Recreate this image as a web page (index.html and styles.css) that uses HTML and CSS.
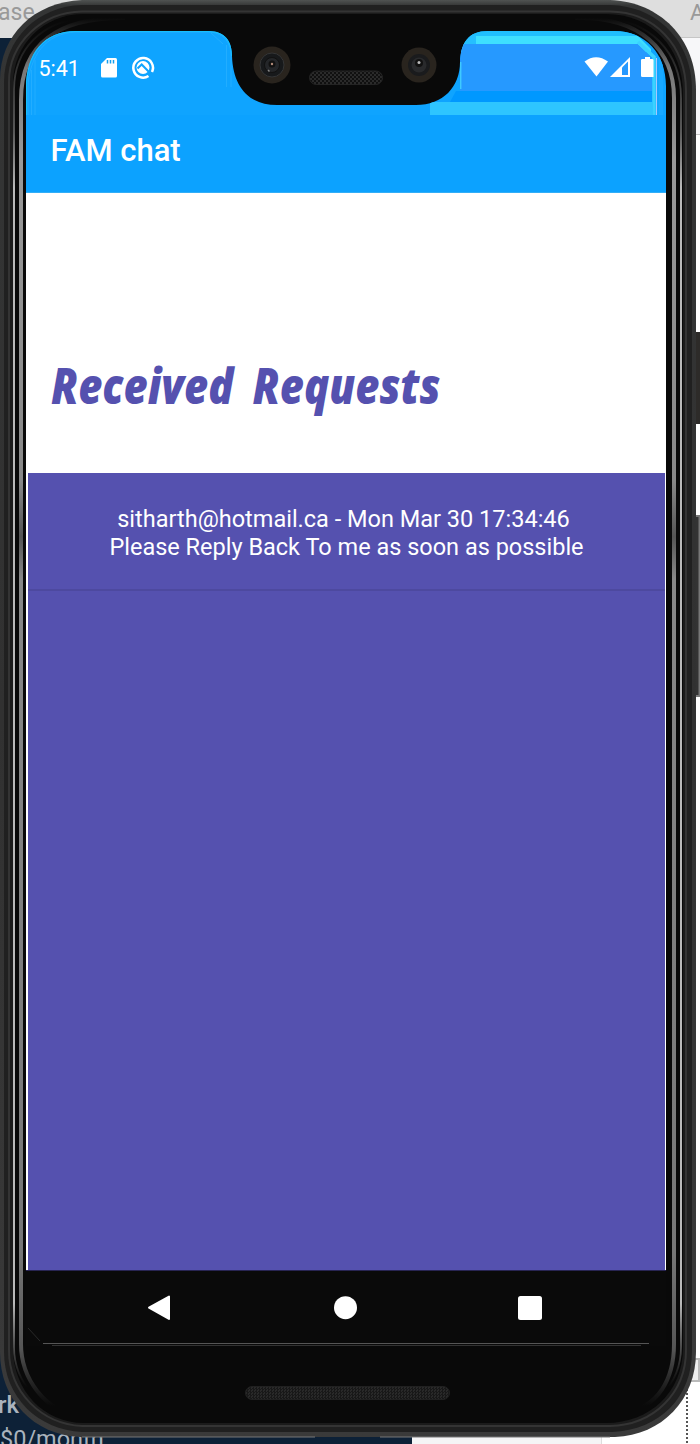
FILE: index.html
```html
<!DOCTYPE html>
<html lang="en">
<head>
<meta charset="utf-8">
<title>FAM chat</title>
<link rel="stylesheet" href="styles.css">
</head>
<body>
<main class="stage">
  <svg class="layer" viewBox="0 0 700 1444" aria-hidden="true">
    <defs>
      <linearGradient id="shell" x1="0" x2="0" y1="0" y2="1">
        <stop offset="0" stop-color="#505352"/><stop offset=".004" stop-color="#343535"/><stop offset=".5" stop-color="#313131"/><stop offset="1" stop-color="#3a3a3a"/>
      </linearGradient>
      <linearGradient id="shine" gradientUnits="userSpaceOnUse" x1="0" y1="18" x2="0" y2="1420">
        <stop offset="0" stop-color="#777" stop-opacity="0"/><stop offset=".035" stop-color="#777"/><stop offset=".1" stop-color="#999"/><stop offset=".33" stop-color="#888"/><stop offset=".37" stop-color="#555"/><stop offset=".4" stop-color="#888"/><stop offset=".88" stop-color="#777"/><stop offset=".95" stop-color="#555"/><stop offset=".99" stop-color="#444" stop-opacity="0"/>
      </linearGradient>
      <linearGradient id="rim" gradientUnits="userSpaceOnUse" x1="0" y1="20" x2="0" y2="1415">
        <stop offset="0" stop-color="#bbb" stop-opacity="0"/><stop offset=".08" stop-color="#bbb" stop-opacity=".5"/><stop offset=".12" stop-color="#ccc"/><stop offset=".92" stop-color="#ccc"/><stop offset=".98" stop-color="#777" stop-opacity="0"/>
      </linearGradient>
      <pattern id="mesh" width="4" height="4" patternUnits="userSpaceOnUse">
        <rect width="4" height="4" fill="#101010"/><path d="M0 1h2M2 3h2" stroke="#444"/>
      </pattern>
      <pattern id="meshLow" width="3" height="3" patternUnits="userSpaceOnUse">
        <rect width="3" height="3" fill="#181818"/><path d="M0 1h1M2 2h1" stroke="#393939"/>
      </pattern>
    </defs>
    <path d="M0 0H700V38H0Z" fill="#dedede"/>
    <path d="M0 38H60V1350H0ZM0 1350H412V1444H0Z" fill="#0d2137"/>
    <path d="M640 38H700V134H640Z" fill="#f7f7f9"/>
    <path d="M640 37.500H700M690 134.500H700" stroke="#c6c6c6"/>
    <path d="M412 1436H601V1444H412Z" fill="#f5f5f6"/>
    <path d="M601.500 1436V1444" stroke="#ddd"/>
    <rect x="688" y="1359" width="11" height="22" fill="#eee" stroke="#bbb" stroke-width="2"/>
    <path d="M687 1385V1444" stroke="#555" stroke-width="2" stroke-dasharray="2 2"/>
    <rect x="694" y="332" width="14" height="92" rx="2" fill="#2d2b29"/>
    <rect x="694" y="515" width="14" height="182" rx="2" fill="#777"/>
    <path d="M697 517V695" stroke="#333" stroke-width="3"/>
    <g font-family="Roboto, sans-serif">
      <text x="-2" y="20" font-size="23" fill="#999">ase</text>
      <text x="690" y="20" font-size="22" fill="#999">A</text>
      <text x="-2" y="1413" font-size="24" font-weight="500" fill="#aab3bd">rk</text>
      <text x="0" y="1447" font-size="23.500" fill="#aab3bd">$0/month</text>
    </g>
    <path d="M82 0H610C660 2 696 38 696 90V1352C696 1400 662 1435 615 1437H80C34 1435 0 1400 0 1352V80C0 35 34 2 82 0Z" fill="url(#shell)"/>
    <path d="M82 5H610C657 6 692 41 692 90V1351C692 1397 660 1430 612 1432H82C38 1430 4 1397 4 1352V82C4 39 38 6 82 5Z" fill="#202020"/>
    <path d="M82 11.500H610C654 12 686 45 686 91V1350C686 1393 654 1425 610 1426H82C42 1424 9 1393 9 1350V82C9 43 42 12 82 11.500Z" fill="#1b1b1b" stroke="#343434" stroke-width="2"/>
    <path d="M84 14H606C652 14 683 48 683 94V1348C683 1392 650 1423 606 1423H84C44 1423 13 1391 13 1348V84C13 44 44 14 84 14Z" fill="#090909"/>
    <path d="M602 18C650 20 681 52 681 98V1347C681 1384 654 1412 614 1418M82 18C44 22 14 47 14 90V1347C14 1383 42 1413 80 1418" fill="none" stroke="url(#rim)" stroke-width="1.800"/>
    <path d="M575 18C640 16 674 50 674 98V1344C674 1376 660 1410 620 1413M125 18C58 17 21 44 21 100V1344C21 1378 45 1412 80 1416" fill="none" stroke="url(#shine)" stroke-width="4"/>
    <path d="M82 1437H315M380 1437H610" stroke="#777"/>
  </svg>

  <section class="screen">
    <div class="status">
      <svg viewBox="26 30 640 85" aria-hidden="true">
        <defs><clipPath id="glass"><path d="M26 115V88C26 53 44 31 76 31H208C226 31 232 42 232 56C233 86 248 105 277 105H416C443 105 460 87 460 62C461 43 468 31 488 31H614C646 31 666 54 666 86V115Z"/></clipPath></defs>
        <g clip-path="url(#glass)">
          <path d="M26 30H666V115H26Z" fill="#0fa4ff"/>
          <path d="M28 115V88C29 56 46 33 76 32H208C222 32 231 41 231 56V87M31.500 115V70M35 115V60M226.500 87V45M211 33L223 44" stroke="#22adff" fill="none"/>
          <path d="M26 115V88C26 53 44 31 76 31H208C226 31 232 42 232 56" fill="none" stroke="#16c0ff" stroke-width="2"/>
          <path d="M462 31H641V36H462Z" fill="#20bfff"/>
          <path d="M476 36H638L651 49V52H460V43H476Z" fill="#3edfff"/>
          <path d="M460 36H476V44H460Z" fill="#25bfff"/>
          <path d="M460 44H638L652 58V91H460Z" fill="#2699ff"/>
          <path d="M456 91H652V102H450Z" fill="#0098ff"/>
          <path d="M430 102H652V115H430Z" fill="#2ec5ff"/>
          <path d="M654 115V57L638 42" fill="none" stroke="#3bd2ff" stroke-width="3.500"/>
          <path d="M656.500 115V58" stroke="#a8c7ff"/><path d="M661 115V56" stroke="#18a8ff" stroke-width="4"/>
          <path d="M460.800 62V89" stroke="#4adfff"/>
        </g>
        <text x="38.500" y="76" class="clock">5:41</text>
        <g fill="#fff">
          <path d="M107 58H115.500Q117 58 117 59.500V76Q117 77.500 115.500 77.500H102.500Q101 77.500 101 76V64Z"/>
          <path d="M107.500 60V63.500M110.500 60V63.500M113.500 60V63.500" stroke="#159fee" stroke-width="1.500"/>
          <path d="M148.500 76A9.800 9.800 0 1 1 152 72" fill="none" stroke="#fff" stroke-width="2.500"/>
          <circle cx="143" cy="67.500" r="6.500"/>
          <path d="M137.500 68.500L141.700 64.500L149.500 72.500" fill="none" stroke="#0fa4ff" stroke-width="2"/>
          <path d="M584.500 61.500Q596 53 608 61.500L596.500 76.500Z"/>
          <path d="M610 77L630 57V77Z"/><path d="M622 67.500L628 61.500V75H622Z" fill="#2699ff"/>
          <path d="M645 57H650V59H652Q653.500 59 653.500 60V77H642.500Q641 77 641 76V60Q641 59 642.500 59H645Z"/>
        </g>
      </svg>
    </div>
    <header class="appbar">FAM chat</header>
    <div class="heading"><h1>Received&nbsp; Requests</h1></div>
    <div class="requests">
      <article class="request">
        <p class="sender">sitharth@hotmail.ca - Mon Mar 30 17:34:46</p>
        <p class="message">Please Reply Back To me as soon as possible</p>
      </article>
    </div>
    <nav class="softkeys">
      <svg viewBox="26 1270 640 76">
        <path d="M26 1270.500H666" stroke="#282553"/>
        <path d="M169 1296.500V1319L149 1307.700Z" fill="#fff" stroke="#fff" stroke-width="2" stroke-linejoin="round"/>
        <circle cx="345.500" cy="1307.700" r="11.500" fill="#fff"/>
        <rect x="518" y="1296" width="24" height="24" rx="2.500" fill="#fff"/>
        <path d="M43 1343.500H649" stroke="#555"/><path d="M52 1345.500H641" stroke="#333"/>
        <path d="M28 1328L40 1341" stroke="#292929"/>
      </svg>
    </nav>
  </section>

  <svg class="layer" viewBox="0 0 700 1444" aria-hidden="true">
    <circle cx="272" cy="65" r="18.500" fill="#29241e"/><circle cx="272" cy="65" r="12" fill="#17191b" stroke="#343536"/>
    <circle cx="272" cy="65" r="7.500" fill="#242629" stroke="#111"/><circle cx="272" cy="64" r="3.500" fill="#111"/><circle cx="272" cy="64" r="1.200" fill="#b18b79"/><path d="M268 70l1.500 1.500" stroke="#888" stroke-width="1.500"/>
    <circle cx="419" cy="65" r="17.500" fill="#29241e"/><circle cx="419" cy="65" r="11" fill="#1a1b1d"/>
    <circle cx="419" cy="65" r="7.500" fill="#292a2c"/><circle cx="419" cy="63" r="4" fill="#111"/><circle cx="419" cy="62.500" r="1.500" fill="#bbb"/>
    <rect x="309.500" y="71" width="73" height="13.500" rx="6.700" fill="url(#mesh)" stroke="#242424"/>
    <rect x="245.500" y="1386.500" width="204" height="13" rx="6.500" fill="url(#meshLow)" stroke="#202020"/>
  </svg>
</main>
</body>
</html>
```
FILE: styles.css
```css
body {
  margin: 0;
  background: #fff;
  font-family: Roboto, sans-serif;
}

.stage {
  display: grid;
  width: 700px;
  height: 1444px;
  overflow: hidden;
}

.layer,
.screen {
  grid-area: 1 / 1;
}

.layer {
  width: 700px;
  height: 1444px;
}

.screen {
  display: flex;
  flex-direction: column;
  width: 640px;
  height: 1316px;
  margin: 30px 0 0 26px;
}

.status {
  height: 85px;
}

.status svg,
.softkeys svg {
  display: block;
  width: 100%;
  height: 100%;
}

.clock {
  font-size: 21.500px;
  fill: #fff;
}

.appbar {
  box-sizing: border-box;
  height: 78px;
  padding-left: 24.500px;
  background: #0ca2ff;
  border-bottom: 1px solid #32aef7;
  color: #fff;
  font-size: 31px;
  font-weight: 500;
  line-height: 71px;
}

.heading {
  box-sizing: border-box;
  height: 280px;
  padding: 162px 0 0 25px;
  background: #fff;
}

.heading h1 {
  width: max-content;
  margin: 0;
  color: #5551af;
  font: italic 800 49px/60px "Open Sans", sans-serif;
  word-spacing: -1.500px;
  transform: scaleX(0.853);
  transform-origin: left;
}

.requests {
  height: 797px;
  border-left: 2px solid #fff;
  border-right: 1px solid #fff;
  background: #5551af;
}

.request {
  box-sizing: border-box;
  height: 118px;
  padding-top: 32px;
  border-bottom: 2px solid #4d499f;
  color: #fff;
  text-align: center;
}

.request p {
  margin: 0;
  font-size: 23.500px;
  line-height: 28px;
}

.request .sender {
  padding-right: 6px;
}

.softkeys {
  height: 76px;
  background: #0a0a0a;
}
```
